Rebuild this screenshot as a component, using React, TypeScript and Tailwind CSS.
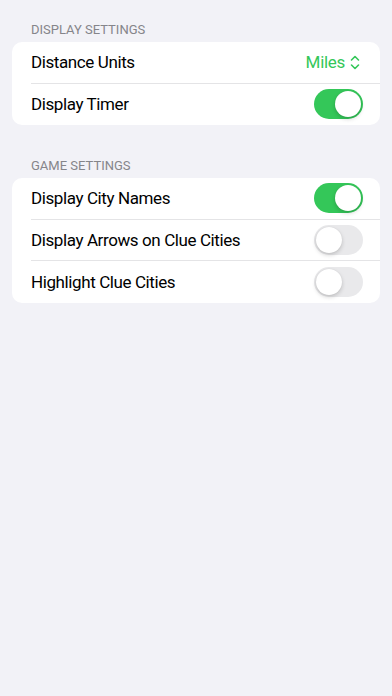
import React from "react";

const Toggle = ({ on }: { on: boolean }) => (
  <div
    className={`w-[49px] h-[30px] rounded-full p-[2px] flex items-center ${
      on ? "bg-[#34c759] justify-end" : "bg-[#e9e9eb] justify-start"
    }`}
  >
    <div className="w-[26px] h-[26px] rounded-full bg-white shadow-[0_2px_4px_rgba(0,0,0,0.18),0_0_1px_rgba(0,0,0,0.1)]" />
  </div>
);

const Row = ({ label, children, last }: { label: string; children: React.ReactNode; last?: boolean }) => (
  <div className="pl-[19px]">
    <div className={`h-[41.5px] flex items-center justify-between pr-[17px] ${last ? "" : "border-b border-[#e4e4e6]"}`}>
      <span className="text-[17px] text-black tracking-[-0.4px] pt-px">{label}</span>
      {children}
    </div>
  </div>
);

const Section = ({ title, children }: { title: string; children: React.ReactNode }) => (
  <div>
    <div className="px-[31px] text-[13px] leading-[16px] text-[#85858a] mb-[4px]">{title}</div>
    <div className="mx-3 bg-white rounded-[10px] overflow-hidden">{children}</div>
  </div>
);

export default function App() {
  return (
    <div
      className="w-[392px] h-[696px] bg-[#f2f2f7] pt-[22px] flex flex-col gap-[33px]"
      style={{ fontFamily: "Roboto, 'Liberation Sans', sans-serif" }}
    >
      <Section title="DISPLAY SETTINGS">
        <Row label="Distance Units">
          <div className="flex items-center gap-[5px] text-[#34c759] text-[17px] pr-[3px] pt-px">
            <span className="tracking-[-0.3px]">Miles</span>
            <svg width="10" height="15" viewBox="0 0 10 15" fill="none" stroke="#34c759" strokeWidth="1.6" strokeLinecap="round" strokeLinejoin="round">
              <path d="M1.5 5 L5 1.5 L8.5 5" />
              <path d="M1.5 10 L5 13.5 L8.5 10" />
            </svg>
          </div>
        </Row>
        <Row label="Display Timer" last>
          <Toggle on />
        </Row>
      </Section>
      <Section title="GAME SETTINGS">
        <Row label="Display City Names">
          <Toggle on />
        </Row>
        <Row label="Display Arrows on Clue Cities">
          <Toggle on={false} />
        </Row>
        <Row label="Highlight Clue Cities" last>
          <Toggle on={false} />
        </Row>
      </Section>
    </div>
  );
}
